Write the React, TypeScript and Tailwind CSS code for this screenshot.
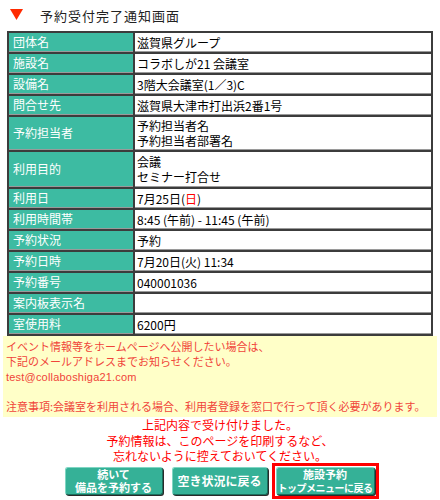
import React from "react";

type Row = { label: string; h: string; value: React.ReactNode };

const rows: Row[] = [
  { label: "団体名", h: "h-[19px]", value: "滋賀県グループ" },
  { label: "施設名", h: "h-[19px]", value: "コラボしが21 会議室" },
  { label: "設備名", h: "h-[19px]", value: "3階大会議室(1／3)C" },
  { label: "問合せ先", h: "h-[19px]", value: "滋賀県大津市打出浜2番1号" },
  {
    label: "予約担当者",
    h: "h-[33px]",
    value: (
      <>
        予約担当者名
        <br />
        予約担当者部署名
      </>
    ),
  },
  {
    label: "利用目的",
    h: "h-[35px]",
    value: (
      <>
        会議
        <br />
        セミナー打合せ
      </>
    ),
  },
  {
    label: "利用日",
    h: "h-[19px]",
    value: (
      <>
        7月25日(<span className="text-[#ff0000]">日</span>)
      </>
    ),
  },
  { label: "利用時間帯", h: "h-[19px]", value: "8:45 (午前) - 11:45 (午前)" },
  { label: "予約状況", h: "h-[19px]", value: "予約" },
  { label: "予約日時", h: "h-[19px]", value: "7月20日(火) 11:34" },
  { label: "予約番号", h: "h-[19px]", value: "040001036" },
  { label: "案内板表示名", h: "h-[19px]", value: "" },
  { label: "室使用料", h: "h-[19px]", value: "6200円" },
];

function Btn({ children, w }: { children: React.ReactNode; w: string }) {
  return (
    <div
      className={`${w} h-[28px] rounded-[3px] bg-[#35b197] border border-t-[#7fd6c3] border-l-[#7fd6c3] border-b-[#1b6e5d] border-r-[#1b6e5d] shadow-[1px_1px_0_#2a2a2a] flex flex-col items-center justify-center text-white font-bold text-[11px] leading-[13px] whitespace-nowrap`}
    >
      {children}
    </div>
  );
}

export default function App() {
  return (
    <div className="w-[440px] h-[500px] bg-white font-['Noto_Sans_CJK_JP',sans-serif] text-black overflow-hidden">
      {/* title */}
      <div className="h-[31px] flex items-center pl-[10px]">
        <svg width="13" height="11" viewBox="0 0 13 11" className="mb-[3px]">
          <polygon points="0,0 13,0 6.5,11" fill="#ff2a00" />
        </svg>
        <span className="ml-[17px] text-[13px] tracking-[1px] text-[#222]">予約受付完了通知画面</span>
      </div>

      {/* table */}
      <div className="pl-[7px]">
        <table className="w-[426px] border-separate border-spacing-[2px] bg-[#3c3c3c]">
          <tbody>
            {rows.map((r) => (
              <tr key={r.label}>
                <td
                  className={`${r.h} w-[124px] p-0 pl-[4px] bg-[#3dbba2] text-white text-[12px] leading-[14px] align-middle border-b border-[#9a9a9a]`}
                >
                  {r.label}
                </td>
                <td
                  className={`${r.h} p-0 pl-[2px] bg-white text-[12px] leading-[15px] align-middle border-b border-[#9a9a9a]`}
                >
                  {r.value}
                </td>
              </tr>
            ))}
          </tbody>
        </table>
      </div>

      {/* notice box */}
      <div className="mx-[3px] h-[81px] bg-[#ffffc8] px-[3px] pt-[3px] text-[11px] leading-[15px] text-[#f0443a]">
        <div>イベント情報等をホームページへ公開したい場合は、</div>
        <div>下記のメールアドレスまでお知らせください。</div>
        <div className="font-['Liberation_Sans',sans-serif] text-[11px] leading-[16px] tracking-[0.2px]">test@collaboshiga21.com</div>
        <div className="h-[14px]" />
        <div>注意事項:会議室を利用される場合、利用者登録を窓口で行って頂く必要があります。</div>
      </div>

      {/* red message */}
      <div className="text-center text-[#ff0000] text-[12px] leading-[15.5px]">
        <div>上記内容で受け付けました。</div>
        <div>予約情報は、このページを印刷するなど、</div>
        <div>忘れないように控えておいてください。</div>
      </div>

      {/* buttons */}
      <div className="-mt-[1px] flex items-center justify-center gap-[9px] pl-[3px]">
        <Btn w="w-[98px]">
          <span>続いて</span>
          <span>備品を予約する</span>
        </Btn>
        <Btn w="w-[96px]">
          <span className="text-[12px]">空き状況に戻る</span>
        </Btn>
        <div className="-ml-[5px] border-[3px] border-[#ff0000] p-[1px]">
          <Btn w="w-[99px]">
            <span>施設予約</span>
            <span className="text-[10px] tracking-[-0.5px]">トップメニューに戻る</span>
          </Btn>
        </div>
      </div>
    </div>
  );
}
